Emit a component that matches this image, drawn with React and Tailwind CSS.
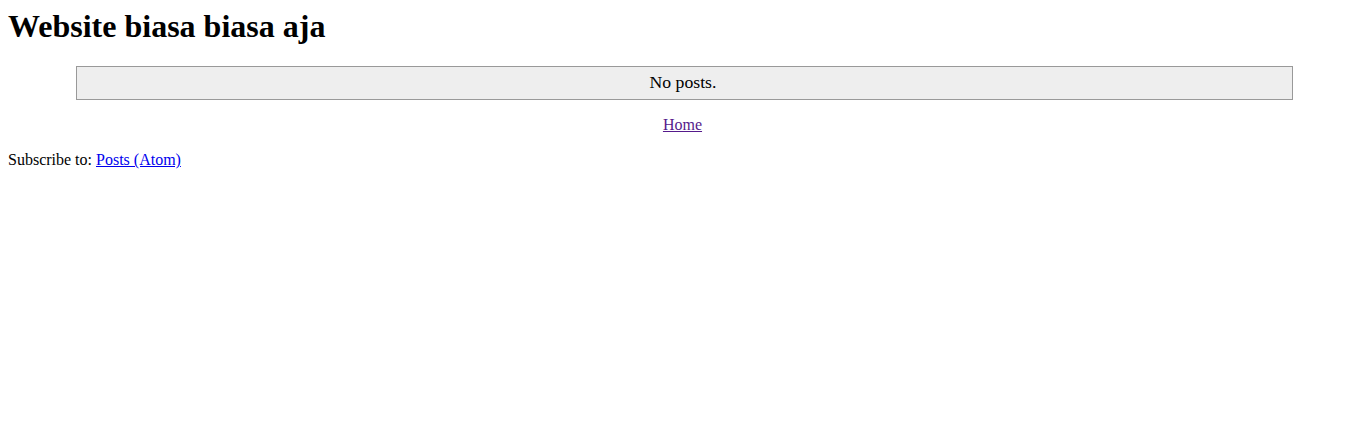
export default function App() {
  return (
    <div className="m-2 text-black text-[16px] font-['Liberation_Serif',serif] leading-[normal]">
      <h1 className="m-0 mb-[21.44px] text-[32px] font-bold leading-[normal]">Website biasa biasa aja</h1>
      <div className="ml-[68px] w-[1217px]">
        <div className="border border-[#999999] bg-[#eeeeee] text-center text-[17.7px] pt-[5px] pb-[6px] pr-[3px] leading-[normal]">
          No posts.
        </div>
        <div className="mt-[16px] text-center pr-[4px]">
          <a href="#" className="underline text-[#551a8b]">Home</a>
        </div>
      </div>
      <div className="mt-[17px]">
        Subscribe to: <a href="#" className="underline text-[#0000ee]">Posts (Atom)</a>
      </div>
    </div>
  );
}
